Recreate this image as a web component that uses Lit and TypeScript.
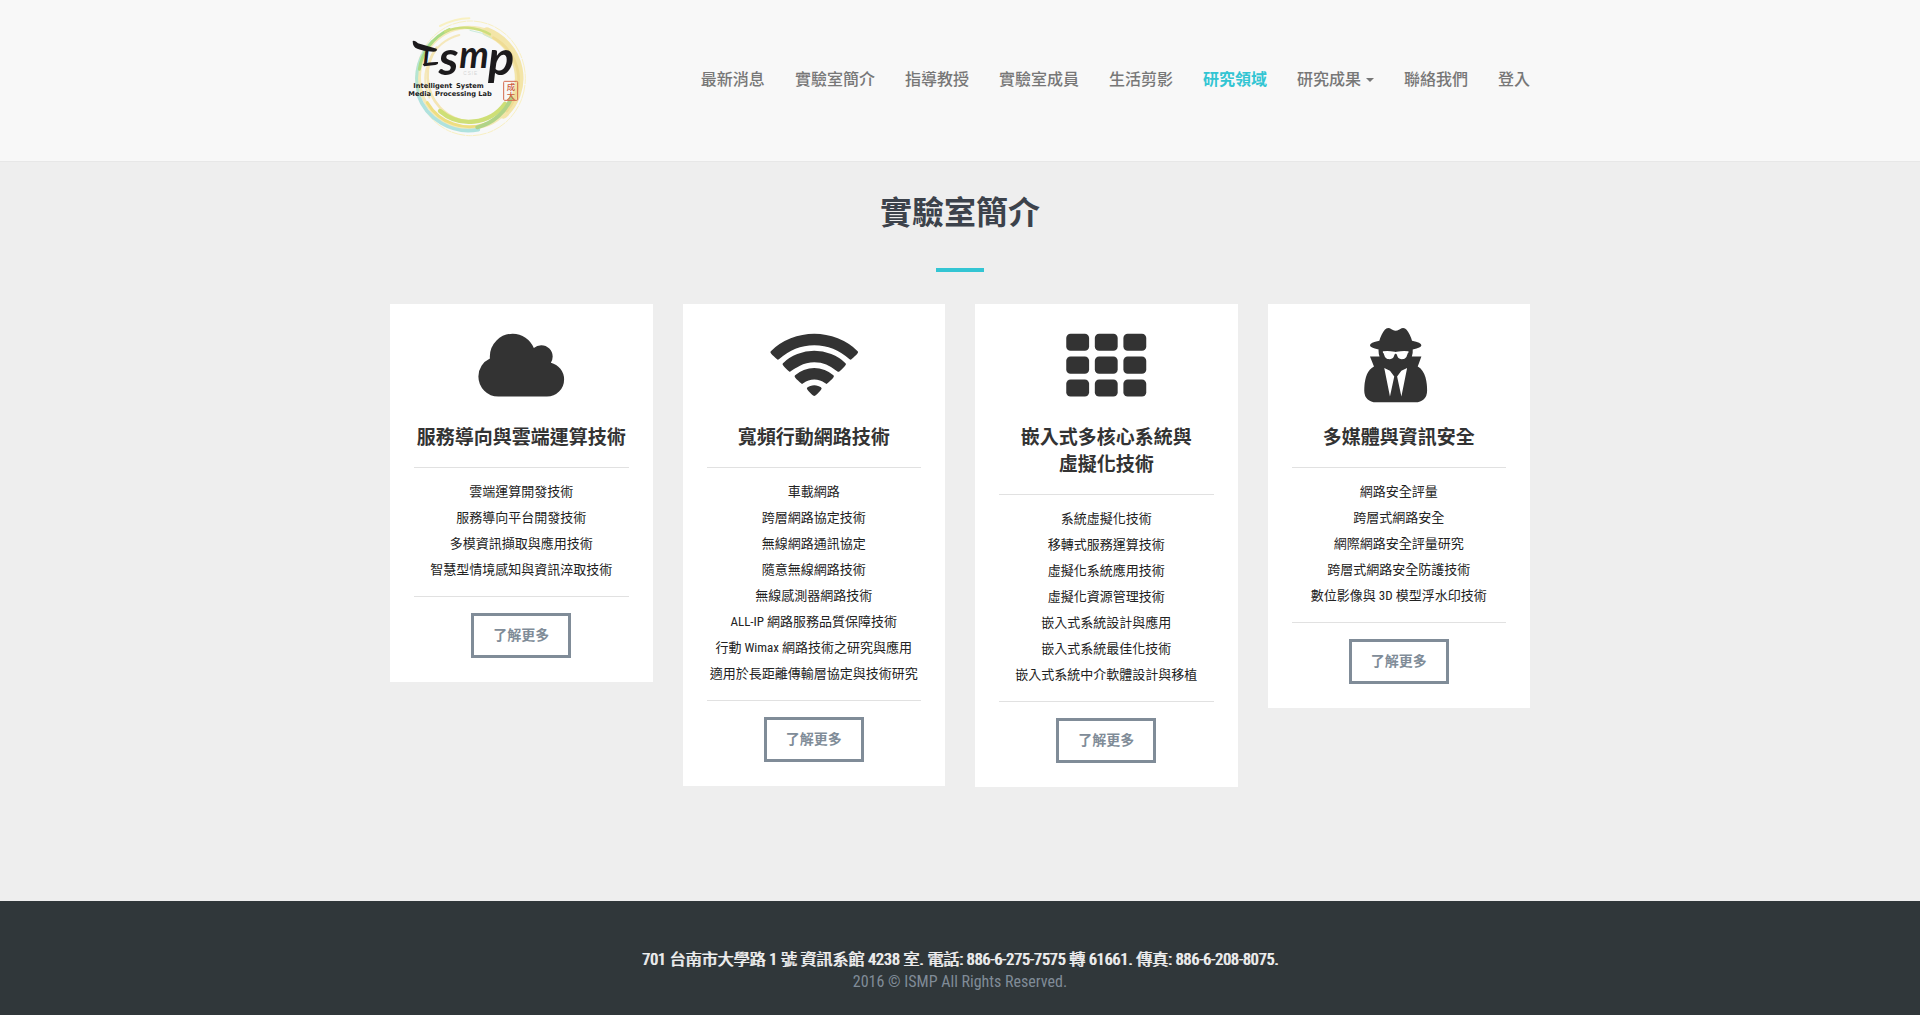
import { LitElement, html, svg, css } from "lit";
import { customElement, property } from "lit/decorators.js";
import { classMap } from "lit/directives/class-map.js";

type IconName = "cloud" | "wifi" | "grid" | "agent";

interface Topic {
  icon: IconName;
  title: string[];
  items: string[];
}

const NAV = [
  { label: "最新消息" },
  { label: "實驗室簡介" },
  { label: "指導教授" },
  { label: "實驗室成員" },
  { label: "生活剪影" },
  { label: "研究領域", active: true },
  { label: "研究成果", menu: true },
  { label: "聯絡我們" },
  { label: "登入" },
];

const TOPICS: Topic[] = [
  {
    icon: "cloud",
    title: ["服務導向與雲端運算技術"],
    items: ["雲端運算開發技術", "服務導向平台開發技術", "多模資訊擷取與應用技術", "智慧型情境感知與資訊淬取技術"],
  },
  {
    icon: "wifi",
    title: ["寬頻行動網路技術"],
    items: [
      "車載網路",
      "跨層網路協定技術",
      "無線網路通訊協定",
      "隨意無線網路技術",
      "無線感測器網路技術",
      "ALL-IP 網路服務品質保障技術",
      "行動 Wimax 網路技術之研究與應用",
      "適用於長距離傳輸層協定與技術研究",
    ],
  },
  {
    icon: "grid",
    title: ["嵌入式多核心系統與", "虛擬化技術"],
    items: [
      "系統虛擬化技術",
      "移轉式服務運算技術",
      "虛擬化系統應用技術",
      "虛擬化資源管理技術",
      "嵌入式系統設計與應用",
      "嵌入式系統最佳化技術",
      "嵌入式系統中介軟體設計與移植",
    ],
  },
  {
    icon: "agent",
    title: ["多媒體與資訊安全"],
    items: ["網路安全評量", "跨層式網路安全", "網際網路安全評量研究", "跨層式網路安全防護技術", "數位影像與 3D 模型浮水印技術"],
  },
];

const ICONS = {
  cloud: {
    box: "0 0 2048 1792",
    art: svg`<path d="M1984 1152q0 159-112.500 271.500t-271.500 112.500h-1088q-185 0-316.500-131.500t-131.500-316.500q0-132 71-241.500t187-163.500q-2-28-2-43 0-212 150-362t362-150q158 0 286.500 88t187.500 230q70-62 166-62 106 0 181 75t75 181q0 75-41 138 129 30 213 134.500t84 239.500z"/>`,
  },
  wifi: {
    box: "0 0 2048 1792",
    art: svg`<path d="M1024 1523q-20 0-93-73.500t-73-93.500q0-32 62.500-54t103.500-22 103.500 22 62.500 54q0 20-73 93.500t-93 73.500zm270-271q-2 0-40-25t-101.500-50-128.500-25-128.500 25-101 50-40.500 25q-18 0-93.500-75t-75.500-93q0-13 10-23 78-77 196-121t233-44 233 44 196 121q10 10 10 23 0 18-75.500 93t-93.500 75zm273-272q-11 0-23-8-136-105-252-154.500t-268-49.500q-85 0-170.500 22t-149 53-113.500 62-79 53-31 22q-17 0-92-75t-75-93q0-12 10-22 132-132 320-205t380-73 380 73 320 205q10 10 10 22 0 18-75 93t-92 75zm271-271q-11 0-22-9-179-157-371.500-236.500t-420.500-79.500-420.500 79.500-371.500 236.500q-11 9-22 9-17 0-92.500-75t-75.500-93q0-13 10-23 187-186 445-288t527-102 527 102 445 288q10 10 10 23 0 18-75.500 93t-92.500 75z"/>`,
  },
  grid: {
    box: "0 0 1792 1792",
    art: [128, 640, 1152].map((y) =>
      [0, 640, 1280].map((x) => svg`<rect x=${x} y=${y} width="512" height="384" rx="96"/>`),
    ),
  },
  agent: {
    box: "80 0 1536 1792",
    art: svg`<path fill-rule="evenodd" d="M640 1536l96-448-96-128-128-64zM896 1536l128-640-128 64-96 128zM1056 528q-2-4-4-6-10-8-96-8-70 0-167 19-7 2-21 2t-21-2q-97-19-167-19-86 0-96 8-2 2-4 6 2 18 4 27 2 3 7.500 6.500t7.500 10.500q2 4 7.500 20.500t7 20.500 7.500 17 8.500 17 9 14 12 13.500 14 9.500 17.500 8 20.500 4 24.500 2q36 0 59-12.500t32.500-30 14.500-34.500 11.500-29.500 17.500-12.500h12q11 0 17.500 12.500t11.500 29.500 14.500 34.500 32.500 30 59 12.500q13 0 24.500-2t20.500-4 17.500-8 14-9.500 12-13.500 9-14 8.500-17 7.500-17 7-20.500 7.500-20.500q2-7 7.500-10.500t7.500-6.500q2-9 4-27zM1472 1405q0 121-73 190t-194 69h-874q-121 0-194-69t-73-190q0-61 4.500-118t19-125.500 37.500-123.500 63.500-103.500 93.500-74.500l-90-220h214q-22-64-22-128 0-12 2-32-194-40-194-96 0-57 210-99 17-62 51.500-134t70.500-114q32-37 76-37 30 0 84 31t84 31 84-31 84-31q44 0 76 37 36 42 70.500 114t51.500 134q210 42 210 99 0 56-194 96 7 81-20 160h214l-82 225q63 33 107.500 96.500t65.500 143.500 29 151.500 8 148.500z"/>`,
  },
};

@customElement("lab-logo")
export class LabLogo extends LitElement {
  static styles = css`
    :host { display: block; }
    .mark { display: block; width: 130px; height: 130px; }
    .ring { fill: none; stroke-linecap: round; opacity: 0.9; }
    .brush { font-family: Lato, "Liberation Sans", sans-serif; font-weight: 700; font-style: italic; fill: #1c1a1c; }
    .name { font: 700 20px "DejaVu Sans", sans-serif; fill: #1a1a1a; }
    .dept { font: 400 14px "Liberation Sans", sans-serif; fill: #d4d6d6; }
    .seal { font: 500 25px "Noto Sans CJK TC", sans-serif; fill: #cc5b3c; }
  `;

  render() {
    return html`
      <svg class="mark" viewBox="30 30 390 390" role="img" aria-label="ISMP Intelligent System Media Processing Lab">
        <g class="ring">
          <ellipse cx="242" cy="232" rx="164" ry="172" stroke="#f8f0bd" stroke-width="3" stroke-dasharray="16 5 40 4"/>
          <ellipse cx="238" cy="230" rx="150" ry="151" stroke="#f5e8b0" stroke-width="10"/>
          <path d="M290 92A154 150 0 0 1 340 340" stroke="#f3e3a0" stroke-width="26"/>
          <path d="M310 110A150 145 0 0 1 350 330" stroke="#efd98a" stroke-width="8"/>
          <path d="M208 102A137 137 0 0 0 118 290" stroke="#f5e7b5" stroke-width="6"/>
          <path d="M140 140A142 142 0 0 0 150 320A142 142 0 0 0 260 362" stroke="#f4e4ac" stroke-width="8"/>
          <path d="M84 270A158 158 0 0 1 126 122" stroke="#aee3d0" stroke-width="9"/>
          <path d="M88 205A155 155 0 0 1 178 86" stroke="#a3d878" stroke-width="9"/>
          <path d="M165 92A153 153 0 0 1 300 100" stroke="#c9dc70" stroke-width="7"/>
          <path d="M240 88A150 150 0 0 1 305 112" stroke="#c5eadb" stroke-width="3"/>
          <path d="M84 280A160 160 0 0 0 265 386" stroke="#a8e0dc" stroke-width="11"/>
          <path d="M112 305A147 147 0 0 0 290 368" stroke="#eddc75" stroke-width="9"/>
          <path d="M150 330A134 134 0 0 0 345 308" stroke="#cadd68" stroke-width="13"/>
          <path d="M262 379A148 148 0 0 0 364 290" stroke="#a9cf7b" stroke-width="12"/>
          <path d="M150 75Q195 53 238 52" stroke="#faf1bd" stroke-width="6"/>
        </g>
        <text class="dept" x="220" y="222" letter-spacing="3">CSIE</text>
        <text class="brush" x="98" y="192" font-size="72">I</text>
        <text class="brush" x="146" y="222" font-size="146">s</text>
        <text class="brush" x="208" y="202" font-size="112">m</text>
        <text class="brush" x="294" y="222" font-size="146">p</text>
        <path d="M68 120Q76 117 84 127L140 143Q144 151 130 152Q98 150 82 143Q68 139 68 120Z" fill="#1c1a1c"/>
        <path d="M98 189Q120 182 144 183Q146 190 136 192L102 196Z" fill="#1c1a1c"/>
        <text class="name" x="70" y="261">Intelligent</text>
        <text class="name" x="198" y="261">System</text>
        <text class="name" x="55" y="285">Media</text>
        <text class="name" x="135" y="285">Processing Lab</text>
        <rect x="341" y="241" width="42" height="57" rx="3" fill="none" stroke="#d4694c" stroke-width="3"/>
        <text class="seal"><tspan x="350" y="268">成</tspan><tspan x="350" y="293">大</tspan></text>
      </svg>
    `;
  }
}

@customElement("topic-card")
export class TopicCard extends LitElement {
  @property({ attribute: false }) topic!: Topic;

  static styles = css`
    :host { display: block; }
    .card { display: flex; flex-direction: column; padding: 24px; background: #fff; color: #222; text-align: center; }
    .icon { height: 80px; fill: #333; }
    .title { margin: 16px 0 0; font-size: 19px; line-height: 27px; font-weight: 700; color: #333; }
    .line { display: block; }
    .list { margin: 16px 0; padding: 11px 0 13px; border: solid #e1e1e1; border-width: 1px 0; list-style: none; font-size: 13px; line-height: 26px; }
    .more { align-self: center; padding: 0 19px; border: 3px solid #808c98; background: #fff; color: #808c98; font: inherit; font-size: 14px; font-weight: 700; line-height: 39px; cursor: pointer; }
    .more:hover { background: #808c98; color: #fff; }
  `;

  render() {
    const icon = ICONS[this.topic.icon];
    return html`
      <article class="card">
        <svg class="icon" viewBox=${icon.box} aria-hidden="true">${icon.art}</svg>
        <h2 class="title">${this.topic.title.map((t) => html`<span class="line">${t}</span>`)}</h2>
        <ul class="list">${this.topic.items.map((t) => html`<li>${t}</li>`)}</ul>
        <button class="more" type="button">了解更多</button>
      </article>
    `;
  }
}

@customElement("app-root")
export class AppRoot extends LitElement {
  static styles = css`
    :host {
      display: flex;
      flex-direction: column;
      min-height: 100vh;
      background: #eee;
      font-family: "Roboto Condensed", "Liberation Sans Narrow", "Noto Sans CJK TC", sans-serif;
      font-size: 16px;
    }
    .wrap { box-sizing: border-box; width: 100%; max-width: 1170px; margin: 0 auto; padding: 0 15px; }
    .header { background: #f8f8f8; border-bottom: 1px solid #e7e7e7; }
    .bar { display: flex; align-items: center; justify-content: space-between; padding-top: 11px; padding-bottom: 20px; }
    .brand { margin-left: 10px; }
    .nav { display: flex; flex-wrap: wrap; gap: 30px; margin: 8px 0 0; padding: 0; list-style: none; line-height: 24px; }
    .link { display: flex; align-items: center; gap: 5px; color: #777; font-weight: 500; text-decoration: none; }
    .link.active { color: #33c5d3; font-weight: 700; }
    .caret { border: 4px solid transparent; border-top-color: currentColor; border-bottom: 0; }
    .main { flex: 1; padding: 29px 0 64px; }
    .heading { margin: 0; color: #3c424b; font-size: 32px; font-weight: 700; line-height: 44px; text-align: center; }
    .rule { width: 48px; height: 4px; margin: 33px auto 32px; border: 0; background: #33c5d3; }
    .grid { display: grid; grid-template-columns: repeat(auto-fit, minmax(240px, 1fr)); gap: 30px; align-items: start; }
    .footer { padding: 48px 15px 22px; background: #30373a; color: #eee; text-align: center; line-height: 22px; }
    .text { margin: 0; }
    .address { text-shadow: 1px 0 currentColor; }
    .legal { color: #808c98; }
  `;

  render() {
    return html`
      <header class="header">
        <div class="wrap bar">
          <a class="brand" href="#"><lab-logo></lab-logo></a>
          <nav>
            <ul class="nav">
              ${NAV.map(
                (n) => html`<li>
                  <a class=${classMap({ link: true, active: !!n.active })} href="#">${n.label}${n.menu ? html`<span class="caret"></span>` : ""}</a>
                </li>`,
              )}
            </ul>
          </nav>
        </div>
      </header>
      <main class="main">
        <div class="wrap">
          <h1 class="heading">實驗室簡介</h1>
          <hr class="rule" />
          <section class="grid">${TOPICS.map((t) => html`<topic-card .topic=${t}></topic-card>`)}</section>
        </div>
      </main>
      <footer class="footer">
        <p class="text address">701 台南市大學路 1 號 資訊系館 4238 室. 電話: 886-6-275-7575 轉 61661. 傳真: 886-6-208-8075.</p>
        <p class="text legal">2016 © ISMP All Rights Reserved.</p>
      </footer>
    `;
  }
}
